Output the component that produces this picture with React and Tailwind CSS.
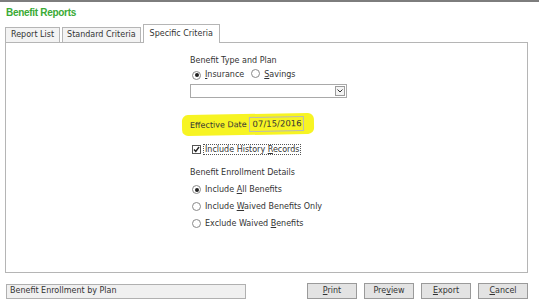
import React from 'react';

const Radio = ({ checked }) => (
  <span className="inline-flex items-center justify-center w-[9px] h-[9px] rounded-full border border-[#8a8a8a] bg-white shrink-0">
    {checked && <span className="w-[4px] h-[4px] rounded-full bg-[#222]" />}
  </span>
);

const Key = ({ children }) => <span className="underline underline-offset-1">{children}</span>;

const Button = ({ children }) => (
  <button className="w-[50px] h-[16px] bg-[#e3e3e3] border border-[#9a9a9a] text-[8px] leading-none text-[#333]">
    {children}
  </button>
);

const App = () => {
  return (
    <div
      className="w-[539px] h-[300px] bg-white border-t-2 border-[#7d7d7d] text-[#333] text-[8px] overflow-hidden"
      style={{ fontFamily: '"DejaVu Sans", Verdana, sans-serif' }}
    >
      {/* Title */}
      <div
        className="pl-[6px] pt-[3px] h-[22px] text-[10px] font-bold text-[#3aaa35] tracking-[-0.3px]"
        style={{ fontFamily: '"Liberation Sans", Arial, sans-serif' }}
      >
        Benefit Reports
      </div>

      {/* Tabs */}
      <div className="flex items-end pl-[5px] h-[18px] gap-[2px]">
        <div className="h-[15px] px-[5px] flex items-center bg-[#f3f3f3] border border-b-0 border-[#b5b5b5]">Report List</div>
        <div className="h-[15px] px-[4px] flex items-center bg-[#f3f3f3] border border-b-0 border-[#b5b5b5]">Standard Criteria</div>
        <div className="h-[19px] px-[6px] flex items-center bg-white border border-b-0 border-[#b5b5b5] relative top-[1px] z-10">Specific Criteria</div>
      </div>

      {/* Panel */}
      <div className="ml-[5px] w-[523px] h-[231px] border border-[#b5b5b5] pl-[184px] pt-[12px]">
        <div className="h-[11px] leading-[11px]">Benefit Type and Plan</div>
        <div className="mt-[2px] flex items-center h-[14px] pl-[2px]">
          <Radio checked />
          <span className="ml-[4px]"><Key>I</Key>nsurance</span>
          <span className="ml-[7px]"><Radio /></span>
          <span className="ml-[4px]"><Key>S</Key>avings</span>
        </div>
        <div className="mt-[2px] w-[157px] h-[14px] border border-[#a9a9a9] bg-white flex justify-end items-center pr-[1px]">
          <span className="w-[10px] h-[10px] border border-[#9c9c9c] bg-[#f4f4f4] flex items-center justify-center">
            <svg width="6" height="4" viewBox="0 0 6 4"><path d="M0.5 0.5 L3 3 L5.5 0.5" fill="none" stroke="#333" strokeWidth="1" /></svg>
          </span>
        </div>

        {/* Effective date with highlighter */}
        <div className="mt-[16px] ml-[-8px] w-[132px] h-[21px] bg-[#f7f423] rounded-[6px] flex items-center pl-[8px] -rotate-1">
          <span>Effective Date</span>
          <span className="ml-[2px] w-[55px] h-[15px] border border-[#b9b9b9] bg-[#f7f423] flex items-center pl-[3px] text-[8.5px]">07/15/2016</span>
        </div>

        <div className="mt-[8px] flex items-center h-[12px] pl-[2px]">
          <span className="w-[9px] h-[9px] border border-[#555] bg-white flex items-center justify-center">
            <svg width="7" height="7" viewBox="0 0 7 7"><path d="M1 3.5 L2.8 5.5 L6 1" fill="none" stroke="#222" strokeWidth="1.4" /></svg>
          </span>
          <span className="ml-[2px] px-[1px] border border-dotted border-[#555] leading-[9px]">Include History <Key>R</Key>ecords</span>
        </div>

        <div className="mt-[12px] h-[11px] leading-[11px]">Benefit Enrollment Details</div>
        <div className="mt-[5px] flex flex-col gap-[4px] pl-[2px]">
          <div className="flex items-center h-[13px]"><Radio checked /><span className="ml-[4px]">Include <Key>A</Key>ll Benefits</span></div>
          <div className="flex items-center h-[13px]"><Radio /><span className="ml-[4px]">Include <Key>W</Key>aived Benefits Only</span></div>
          <div className="flex items-center h-[13px]"><Radio /><span className="ml-[4px]">Exclude Waived <Key>B</Key>enefits</span></div>
        </div>
      </div>

      {/* Footer */}
      <div className="flex items-center mt-[10px] pl-[6px] pr-[11px]">
        <div className="w-[240px] h-[15px] bg-[#f0f0f0] border border-[#b0b0b0] flex items-center pl-[3px]">Benefit Enrollment by Plan</div>
        <div className="ml-auto flex gap-[7px]">
          <Button><Key>P</Key>rint</Button>
          <Button>Pre<Key>v</Key>iew</Button>
          <Button><Key>E</Key>xport</Button>
          <Button><Key>C</Key>ancel</Button>
        </div>
      </div>
    </div>
  );
};

export default App;
